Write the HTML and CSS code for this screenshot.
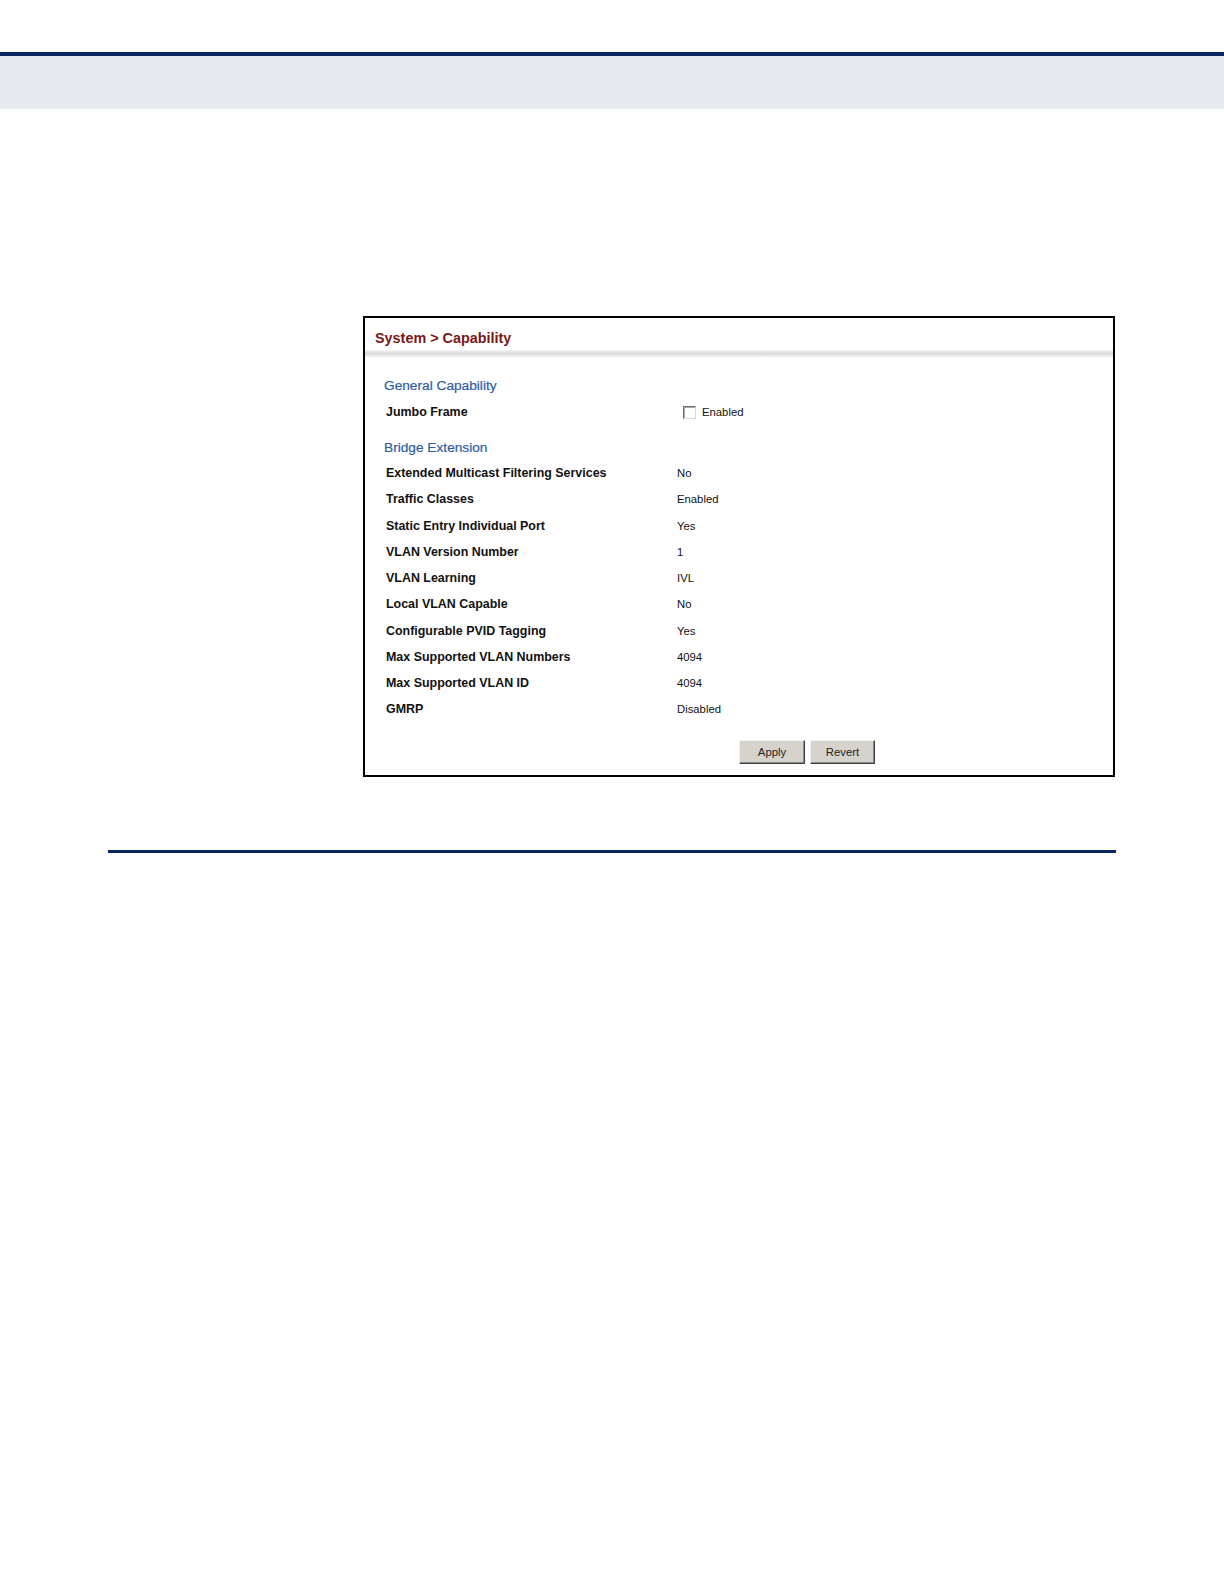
FILE: index.html
```html
<!DOCTYPE html>
<html>
<head>
<meta charset="utf-8">
<title>System &gt; Capability</title>
<link rel="stylesheet" href="styles.css">
</head>
<body>
<div class="topline"></div>
<div class="band"></div>
<main class="content">
  <section class="panel">
    <div class="ptitle">System &gt; Capability</div>
    <div class="pbar"></div>
    <div class="pbody">
      <h2 class="heading first">General Capability</h2>
      <div class="grid jumbo">
        <div class="label">Jumbo Frame</div>
        <div class="value check"><span class="box"></span><span>Enabled</span></div>
      </div>
      <h2 class="heading second">Bridge Extension</h2>
      <div class="grid">
        <div class="label">Extended Multicast Filtering Services</div><div class="value">No</div>
        <div class="label">Traffic Classes</div><div class="value">Enabled</div>
        <div class="label">Static Entry Individual Port</div><div class="value">Yes</div>
        <div class="label">VLAN Version Number</div><div class="value">1</div>
        <div class="label">VLAN Learning</div><div class="value">IVL</div>
        <div class="label">Local VLAN Capable</div><div class="value">No</div>
        <div class="label">Configurable PVID Tagging</div><div class="value">Yes</div>
        <div class="label">Max Supported VLAN Numbers</div><div class="value">4094</div>
        <div class="label">Max Supported VLAN ID</div><div class="value">4094</div>
        <div class="label">GMRP</div><div class="value">Disabled</div>
      </div>
      <div class="buttons">
        <button class="btn apply">Apply</button>
        <button class="btn revert">Revert</button>
      </div>
    </div>
  </section>
  <div class="rule"></div>
</main>
</body>
</html>
```

FILE: styles.css
```css
html, body {
  margin: 0;
  padding: 0;
  background: #ffffff;
  font-family: "Liberation Sans", Arial, sans-serif;
}

.topline {
  margin-top: 52px;
  height: 4px;
  background: #0b2462;
}

.band {
  height: 53px;
  background: #e6e9f0;
}

.content {
  padding-top: 207px;
}

.panel {
  margin-left: 363px;
  width: 748px;
  border: 2px solid #000000;
  background: #ffffff;
}

.ptitle {
  padding: 9px 0 0 10px;
  line-height: 23px;
  font-size: 14.4px;
  font-weight: bold;
  color: #7a1818;
}

.pbar {
  height: 8px;
  background: linear-gradient(#f4f4f4 0%, #d9d9d9 45%, #ececec 75%, #ffffff 100%);
}

.pbody {
  padding: 16px 0 10.5px 19px;
}

.heading {
  margin: 0;
  font-size: 13.7px;
  font-weight: normal;
  line-height: 24px;
  color: #2b5ba3;
  -webkit-text-stroke: 0.2px #2b5ba3;
}

.heading.second {
  margin-top: 10px;
}

.grid {
  display: grid;
  grid-template-columns: 293px 1fr;
  grid-auto-rows: 26.25px;
  align-items: center;
}

.grid.jumbo {
  grid-auto-rows: 28px;
}

.label {
  padding-left: 2px;
  font-size: 12.45px;
  font-weight: bold;
  color: #111111;
}

.value {
  font-size: 11.3px;
  color: #111111;
}

.check {
  display: flex;
  align-items: center;
  gap: 6px;
  padding-left: 6px;
}

.box {
  display: inline-block;
  width: 11px;
  height: 11px;
  border: 1px solid;
  border-color: #707070 #d8d8d8 #d8d8d8 #707070;
  box-shadow: inset 1px 1px 0 #a8a8a8;
  background: #ffffff;
}

.buttons {
  display: flex;
  gap: 5px;
  margin-top: 17.5px;
  padding-left: 355px;
}

.btn {
  height: 24px;
  padding: 0;
  font-family: "Liberation Sans", Arial, sans-serif;
  font-size: 11.3px;
  color: #222222;
  background: #d6d3cc;
  border: 1px solid;
  border-color: #f4f4f4 #404040 #404040 #f4f4f4;
  box-shadow: inset -1px -1px 0 #8a8a8a;
}

.apply {
  width: 66px;
}

.revert {
  width: 65px;
}

.rule {
  margin: 73.5px 0 0 108px;
  width: 1008px;
  height: 3px;
  background: #0b2462;
}
```
